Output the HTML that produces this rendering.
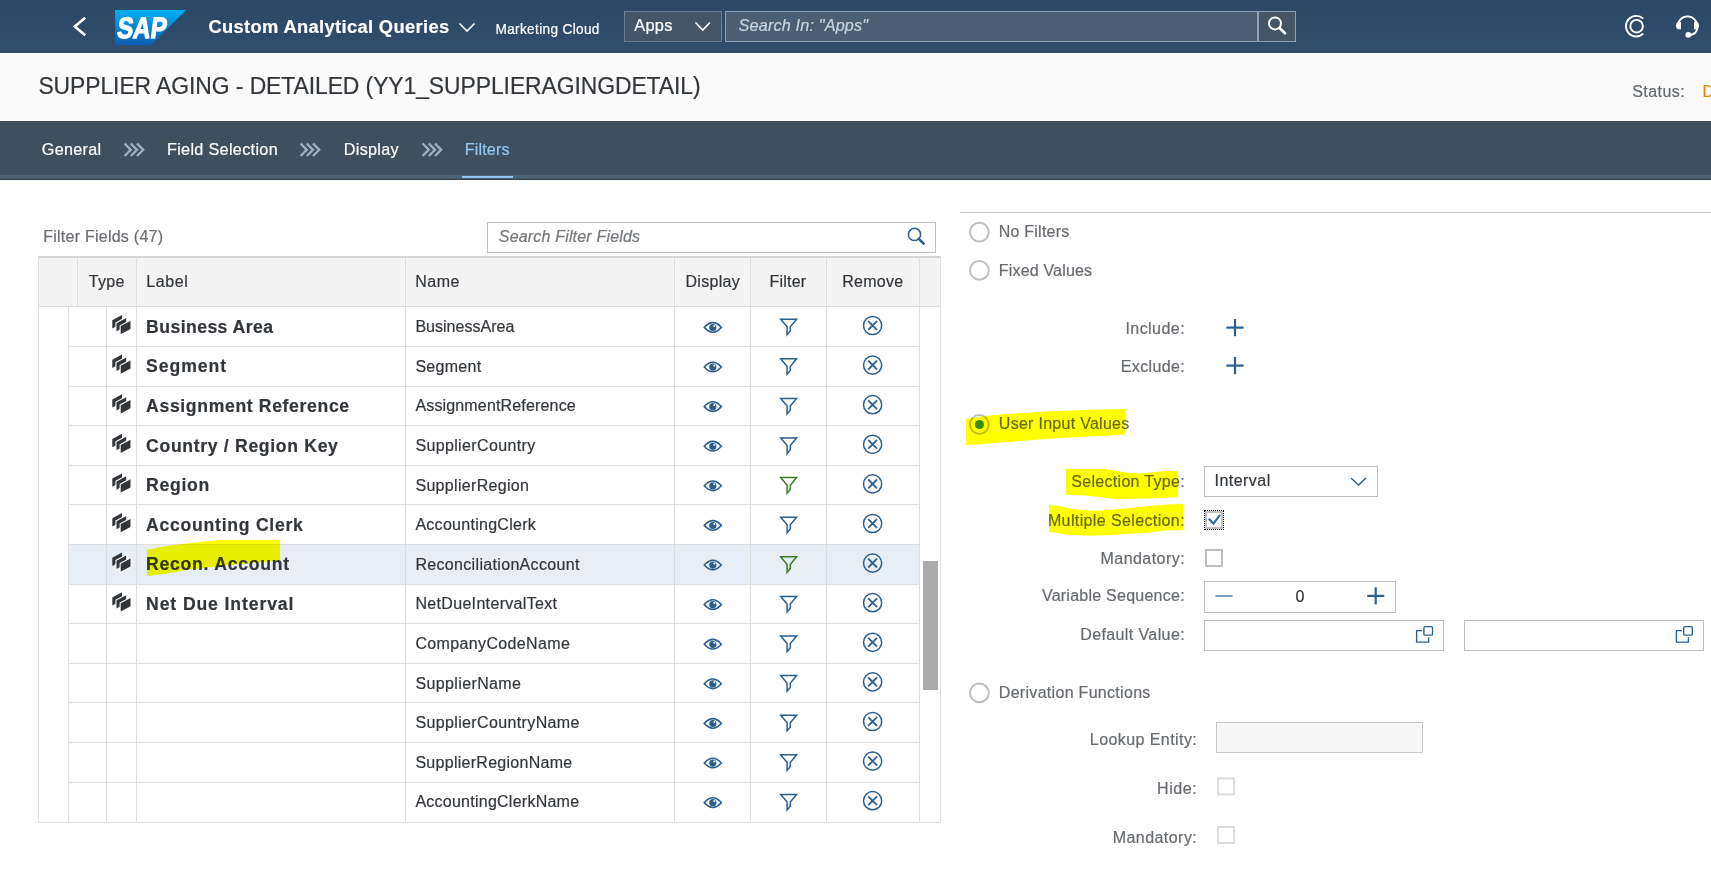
<!DOCTYPE html>
<html><head><meta charset="utf-8"><title>Custom Analytical Queries</title>
<style>
html,body{margin:0;padding:0;width:1711px;height:870px;overflow:hidden;background:#fff;font-family:"Liberation Sans",sans-serif;}
body{position:relative;}
.t{position:absolute;line-height:1;white-space:nowrap;-webkit-text-stroke:0.2px currentColor;}
svg text{font-family:"Liberation Sans",sans-serif;}
</style></head><body>
<div style="position:absolute;left:0px;top:0px;width:1711px;height:53px;background:linear-gradient(#2b4866,#2e4b69 60%,#31506e)"></div>
<div style="position:absolute;left:0px;top:53px;width:1711px;height:68px;background:#fafafa"></div>
<div style="position:absolute;left:0px;top:121px;width:1711px;height:54px;background:#3e4f5f"></div>
<div style="position:absolute;left:0px;top:175px;width:1711px;height:3px;background:#4f6378"></div>
<div style="position:absolute;left:0px;top:178px;width:1711px;height:1px;background:#44556a"></div>
<div style="position:absolute;left:0px;top:179px;width:1711px;height:1px;background:#35434f"></div>
<div style="position:absolute;left:462px;top:176px;width:51px;height:2px;background:#91c8f6"></div>
<svg style="position:absolute;left:0;top:0" width="1711" height="52" viewBox="0 0 1711 52"><defs><linearGradient id="sapg" x1="0" y1="0" x2="0" y2="1"><stop offset="0" stop-color="#00b1f1"/><stop offset="0.55" stop-color="#0a7fd0"/><stop offset="1" stop-color="#0a5db2"/></linearGradient></defs><polyline points="85.2,17.8 74.8,26.5 85.2,35.2" fill="none" stroke="#fff" stroke-width="2.6"/><polygon points="115,10 186,10 151,45 115,45" fill="url(#sapg)"/><g transform="translate(116.2,37.9) skewX(-7)"><text x="0" y="0" font-family="Liberation Sans" font-weight="bold" font-size="29.5" fill="#fff" stroke="#fff" stroke-width="1.3" stroke-linejoin="round" textLength="49.5" lengthAdjust="spacingAndGlyphs">SAP</text></g><polyline points="459.5,23.5 467,31 474.5,23.5" fill="none" stroke="#fff" stroke-width="1.6"/><rect x="624.5" y="11.5" width="97" height="30" fill="#435669" stroke="#6c8096" stroke-width="1"/><polyline points="695.5,22.5 702.75,30 710,22.5" fill="none" stroke="#fff" stroke-width="1.6"/><rect x="725.5" y="11.5" width="532" height="30" fill="#4b5f74" stroke="#8da1b6" stroke-width="1"/><rect x="1258.5" y="11.5" width="37" height="30" fill="#435567" stroke="#8da1b6" stroke-width="1"/><circle cx="1275" cy="23.4" r="6" fill="none" stroke="#fff" stroke-width="2"/><line x1="1279.3" y1="27.8" x2="1285" y2="33.3" stroke="#fff" stroke-width="2.6" stroke-linecap="round"/><path d="M1643.2,18.6 A10.3,10.3 0 1 0 1643.2,33.8" fill="none" stroke="#fff" stroke-width="1.9"/><circle cx="1636.6" cy="26.2" r="6.3" fill="none" stroke="#fff" stroke-width="1.9"/><path d="M1677.6,26.4 A9.9,10.1 0 0 1 1697.4,26.4 L1697.4,28 A8.5,8.5 0 0 1 1690,35" fill="none" stroke="#fff" stroke-width="1.8"/><path d="M1681,22 L1681,29.2 L1678.6,29.2 A2.6,3.6 0 0 1 1678.6,22 Z" fill="#fff"/><path d="M1694,22 L1694,29.2 L1696.3,29.2 A2.6,3.6 0 0 0 1696.3,22 Z" fill="#fff"/><circle cx="1688.3" cy="34.8" r="2.9" fill="#fff"/></svg>
<div class="t" style="left:208.50px;top:18.11px;font-size:18.3px;color:#fff;font-weight:bold;letter-spacing:0.36px;font-style:normal;">Custom Analytical Queries</div>
<div class="t" style="left:495.50px;top:22.89px;font-size:13.6px;color:#fff;font-weight:normal;letter-spacing:0.35px;font-style:normal;transform:scaleY(1.1);transform-origin:0 11.51px;">Marketing Cloud</div>
<div class="t" style="left:634.20px;top:16.92px;font-size:16.4px;color:#fff;font-weight:normal;letter-spacing:0.27px;font-style:normal;">Apps</div>
<div class="t" style="left:738.60px;top:17.09px;font-size:16.2px;color:#c9d4df;font-weight:normal;letter-spacing:0.17px;font-style:italic;">Search In: "Apps"</div>
<div class="t" style="left:38.40px;top:74.82px;font-size:22.9px;color:#32363a;font-weight:normal;letter-spacing:-0.07px;font-style:normal;transform:scaleY(1.08);transform-origin:0 19.38px;">SUPPLIER AGING - DETAILED (YY1_SUPPLIERAGINGDETAIL)</div>
<div class="t" style="left:1632.20px;top:83.86px;font-size:16px;color:#666a6e;font-weight:normal;letter-spacing:0.45px;font-style:normal;">Status:</div>
<div class="t" style="left:1702.50px;top:83.86px;font-size:16px;color:#e8870a;font-weight:normal;letter-spacing:0px;font-style:normal;">D</div>
<svg style="position:absolute;left:0;top:121px" width="1711" height="60" viewBox="0 121 1711 60"><polyline points="124.6,143.5 130.8,149.8 124.6,156" fill="none" stroke="#9bb0c5" stroke-width="2.4"/><polyline points="130.8,143.5 137.0,149.8 130.8,156" fill="none" stroke="#9bb0c5" stroke-width="2.4"/><polyline points="137.0,143.5 143.2,149.8 137.0,156" fill="none" stroke="#9bb0c5" stroke-width="2.4"/><polyline points="300.6,143.5 306.8,149.8 300.6,156" fill="none" stroke="#9bb0c5" stroke-width="2.4"/><polyline points="306.8,143.5 313.0,149.8 306.8,156" fill="none" stroke="#9bb0c5" stroke-width="2.4"/><polyline points="313.0,143.5 319.2,149.8 313.0,156" fill="none" stroke="#9bb0c5" stroke-width="2.4"/><polyline points="422.6,143.5 428.8,149.8 422.6,156" fill="none" stroke="#9bb0c5" stroke-width="2.4"/><polyline points="428.8,143.5 435.0,149.8 428.8,156" fill="none" stroke="#9bb0c5" stroke-width="2.4"/><polyline points="435.0,143.5 441.2,149.8 435.0,156" fill="none" stroke="#9bb0c5" stroke-width="2.4"/></svg>
<div class="t" style="left:41.80px;top:141.49px;font-size:16.2px;color:#fff;font-weight:normal;letter-spacing:0.28px;font-style:normal;">General</div>
<div class="t" style="left:167.00px;top:141.49px;font-size:16.2px;color:#fff;font-weight:normal;letter-spacing:0.32px;font-style:normal;">Field Selection</div>
<div class="t" style="left:343.80px;top:141.49px;font-size:16.2px;color:#fff;font-weight:normal;letter-spacing:0.28px;font-style:normal;">Display</div>
<div class="t" style="left:464.80px;top:141.49px;font-size:16.2px;color:#91c8f6;font-weight:normal;letter-spacing:0.12px;font-style:normal;">Filters</div>
<div class="t" style="left:43.20px;top:228.86px;font-size:16px;color:#6a6d70;font-weight:normal;letter-spacing:0.25px;font-style:normal;">Filter Fields (47)</div>
<svg style="position:absolute;left:0;top:0" width="1711" height="870" viewBox="0 0 1711 870"><rect x="487.5" y="222.5" width="448" height="30" fill="#fff" stroke="#bfbfbf" stroke-width="1"/><circle cx="914.5" cy="234.4" r="6.1" fill="none" stroke="#2b5f8f" stroke-width="1.6"/><line x1="918.8" y1="238.8" x2="923.6" y2="243.6" stroke="#2b5f8f" stroke-width="2.6" stroke-linecap="round"/></svg>
<div class="t" style="left:498.80px;top:229.26px;font-size:16px;color:#74777a;font-weight:normal;letter-spacing:0.18px;font-style:italic;">Search Filter Fields</div>
<div style="position:absolute;left:38px;top:256px;width:902px;height:50px;background:#f4f4f4"></div>
<div style="position:absolute;left:68px;top:544px;width:851px;height:40px;background:#e8eef6"></div>
<svg style="position:absolute;left:0;top:0" width="1711" height="870" viewBox="0 0 1711 870"><rect x="38" y="256" width="903" height="2" fill="#d4d4d4"/><rect x="38" y="822" width="903" height="1" fill="#dedede"/><rect x="38" y="256" width="1" height="567" fill="#dedede"/><rect x="940" y="256" width="1" height="567" fill="#dedede"/><rect x="77" y="258" width="1" height="48" fill="#e0e0e0"/><rect x="136" y="258" width="1" height="48" fill="#e0e0e0"/><rect x="405" y="258" width="1" height="48" fill="#e0e0e0"/><rect x="674" y="258" width="1" height="48" fill="#e0e0e0"/><rect x="750" y="258" width="1" height="48" fill="#e0e0e0"/><rect x="826" y="258" width="1" height="48" fill="#e0e0e0"/><rect x="919" y="258" width="1" height="48" fill="#e0e0e0"/><rect x="38" y="306" width="902" height="1" fill="#dedede"/><rect x="68" y="306" width="1" height="516" fill="#dedede"/><rect x="106" y="306" width="1" height="516" fill="#dedede"/><rect x="136" y="306" width="1" height="516" fill="#dedede"/><rect x="405" y="306" width="1" height="516" fill="#dedede"/><rect x="674" y="306" width="1" height="516" fill="#dedede"/><rect x="750" y="306" width="1" height="516" fill="#dedede"/><rect x="826" y="306" width="1" height="516" fill="#dedede"/><rect x="919" y="306" width="1" height="516" fill="#dedede"/><rect x="68" y="346" width="851" height="1" fill="#dedede"/><rect x="68" y="386" width="851" height="1" fill="#dedede"/><rect x="68" y="425" width="851" height="1" fill="#dedede"/><rect x="68" y="465" width="851" height="1" fill="#dedede"/><rect x="68" y="504" width="851" height="1" fill="#dedede"/><rect x="68" y="544" width="851" height="1" fill="#dedede"/><rect x="68" y="584" width="851" height="1" fill="#dedede"/><rect x="68" y="623" width="851" height="1" fill="#dedede"/><rect x="68" y="663" width="851" height="1" fill="#dedede"/><rect x="68" y="702" width="851" height="1" fill="#dedede"/><rect x="68" y="742" width="851" height="1" fill="#dedede"/><rect x="68" y="782" width="851" height="1" fill="#dedede"/></svg>
<div class="t" style="left:88.80px;top:274.46px;font-size:16px;color:#32363a;font-weight:normal;letter-spacing:0.3px;font-style:normal;">Type</div>
<div class="t" style="left:146.30px;top:274.46px;font-size:16px;color:#32363a;font-weight:normal;letter-spacing:0.6px;font-style:normal;">Label</div>
<div class="t" style="left:415.30px;top:274.46px;font-size:16px;color:#32363a;font-weight:normal;letter-spacing:0.5px;font-style:normal;">Name</div>
<div class="t" style="left:685.50px;top:274.46px;font-size:16px;color:#32363a;font-weight:normal;letter-spacing:0.28px;font-style:normal;">Display</div>
<div class="t" style="left:769.50px;top:274.46px;font-size:16px;color:#32363a;font-weight:normal;letter-spacing:0.2px;font-style:normal;">Filter</div>
<div class="t" style="left:842.20px;top:274.46px;font-size:16px;color:#32363a;font-weight:normal;letter-spacing:0.26px;font-style:normal;">Remove</div>
<div class="t" style="left:146.10px;top:318.70px;font-size:17.6px;color:#32363a;font-weight:bold;letter-spacing:0.44px;font-style:normal;">Business Area</div>
<div class="t" style="left:415.40px;top:319.16px;font-size:16px;color:#32363a;font-weight:normal;letter-spacing:0.02px;font-style:normal;">BusinessArea</div>
<div class="t" style="left:146.10px;top:358.30px;font-size:17.6px;color:#32363a;font-weight:bold;letter-spacing:0.95px;font-style:normal;">Segment</div>
<div class="t" style="left:415.40px;top:358.76px;font-size:16px;color:#32363a;font-weight:normal;letter-spacing:0.28px;font-style:normal;">Segment</div>
<div class="t" style="left:146.10px;top:397.90px;font-size:17.6px;color:#32363a;font-weight:bold;letter-spacing:0.65px;font-style:normal;">Assignment Reference</div>
<div class="t" style="left:415.40px;top:398.36px;font-size:16px;color:#32363a;font-weight:normal;letter-spacing:0.16px;font-style:normal;">AssignmentReference</div>
<div class="t" style="left:146.10px;top:437.50px;font-size:17.6px;color:#32363a;font-weight:bold;letter-spacing:0.68px;font-style:normal;">Country / Region Key</div>
<div class="t" style="left:415.40px;top:437.96px;font-size:16px;color:#32363a;font-weight:normal;letter-spacing:0.36px;font-style:normal;">SupplierCountry</div>
<div class="t" style="left:146.10px;top:477.10px;font-size:17.6px;color:#32363a;font-weight:bold;letter-spacing:0.72px;font-style:normal;">Region</div>
<div class="t" style="left:415.40px;top:477.56px;font-size:16px;color:#32363a;font-weight:normal;letter-spacing:0.32px;font-style:normal;">SupplierRegion</div>
<div class="t" style="left:146.10px;top:516.70px;font-size:17.6px;color:#32363a;font-weight:bold;letter-spacing:0.74px;font-style:normal;">Accounting Clerk</div>
<div class="t" style="left:415.40px;top:517.16px;font-size:16px;color:#32363a;font-weight:normal;letter-spacing:0.28px;font-style:normal;">AccountingClerk</div>
<div class="t" style="left:146.10px;top:556.30px;font-size:17.6px;color:#32363a;font-weight:bold;letter-spacing:0.75px;font-style:normal;">Recon. Account</div>
<div class="t" style="left:415.40px;top:556.76px;font-size:16px;color:#32363a;font-weight:normal;letter-spacing:0.33px;font-style:normal;">ReconciliationAccount</div>
<div class="t" style="left:146.10px;top:595.90px;font-size:17.6px;color:#32363a;font-weight:bold;letter-spacing:0.89px;font-style:normal;">Net Due Interval</div>
<div class="t" style="left:415.40px;top:596.36px;font-size:16px;color:#32363a;font-weight:normal;letter-spacing:0.33px;font-style:normal;">NetDueIntervalText</div>
<div class="t" style="left:415.40px;top:635.96px;font-size:16px;color:#32363a;font-weight:normal;letter-spacing:0.36px;font-style:normal;">CompanyCodeName</div>
<div class="t" style="left:415.40px;top:675.56px;font-size:16px;color:#32363a;font-weight:normal;letter-spacing:0.38px;font-style:normal;">SupplierName</div>
<div class="t" style="left:415.40px;top:715.16px;font-size:16px;color:#32363a;font-weight:normal;letter-spacing:0.37px;font-style:normal;">SupplierCountryName</div>
<div class="t" style="left:415.40px;top:754.76px;font-size:16px;color:#32363a;font-weight:normal;letter-spacing:0.28px;font-style:normal;">SupplierRegionName</div>
<div class="t" style="left:415.40px;top:794.36px;font-size:16px;color:#32363a;font-weight:normal;letter-spacing:0.25px;font-style:normal;">AccountingClerkName</div>
<svg style="position:absolute;left:0;top:0" width="1711" height="870" viewBox="0 0 1711 870"><g transform="translate(0,0.00)"><polygon points="112.3,320.2 122,315 122,323.2 112.3,328.4" fill="#32363a"/><polygon points="116.5,323.15 126.2,317.95 126.2,326.15 116.5,331.35" fill="#fff" stroke="#fff" stroke-width="2.2"/><polygon points="116.5,323.15 126.2,317.95 126.2,326.15 116.5,331.35" fill="#32363a"/><polygon points="120.7,326.1 130.5,320.9 130.5,329 120.7,334.2" fill="#fff" stroke="#fff" stroke-width="2.2"/><polygon points="120.7,326.1 130.5,320.9 130.5,329 120.7,334.2" fill="#32363a"/></g><g transform="translate(0,0.00)"><path d="M704.3,327.4 Q712.8,317.8 721.3,327.4 Q712.8,337 704.3,327.4 Z" fill="none" stroke="#2b5f8f" stroke-width="1.6"/><circle cx="712.8" cy="327.5" r="3.6" fill="#2b5f8f"/><circle cx="714.3" cy="325.9" r="1" fill="#fff"/></g><g transform="translate(0,0.00)"><path d="M780.7,319.2 L796.6,319.2 L790.3,326.8 L790.3,331 L787.1,334.8 L787.1,326.8 Z" fill="none" stroke="#2b5f8f" stroke-width="1.5" stroke-linejoin="miter"/><circle cx="872.6" cy="325.5" r="9.1" fill="none" stroke="#2b5f8f" stroke-width="1.5"/><path d="M868.2,321.1 L877,329.9 M877,321.1 L868.2,329.9" stroke="#2b5f8f" stroke-width="1.8"/></g><g transform="translate(0,39.60)"><polygon points="112.3,320.2 122,315 122,323.2 112.3,328.4" fill="#32363a"/><polygon points="116.5,323.15 126.2,317.95 126.2,326.15 116.5,331.35" fill="#fff" stroke="#fff" stroke-width="2.2"/><polygon points="116.5,323.15 126.2,317.95 126.2,326.15 116.5,331.35" fill="#32363a"/><polygon points="120.7,326.1 130.5,320.9 130.5,329 120.7,334.2" fill="#fff" stroke="#fff" stroke-width="2.2"/><polygon points="120.7,326.1 130.5,320.9 130.5,329 120.7,334.2" fill="#32363a"/></g><g transform="translate(0,39.60)"><path d="M704.3,327.4 Q712.8,317.8 721.3,327.4 Q712.8,337 704.3,327.4 Z" fill="none" stroke="#2b5f8f" stroke-width="1.6"/><circle cx="712.8" cy="327.5" r="3.6" fill="#2b5f8f"/><circle cx="714.3" cy="325.9" r="1" fill="#fff"/></g><g transform="translate(0,39.60)"><path d="M780.7,319.2 L796.6,319.2 L790.3,326.8 L790.3,331 L787.1,334.8 L787.1,326.8 Z" fill="none" stroke="#2b5f8f" stroke-width="1.5" stroke-linejoin="miter"/><circle cx="872.6" cy="325.5" r="9.1" fill="none" stroke="#2b5f8f" stroke-width="1.5"/><path d="M868.2,321.1 L877,329.9 M877,321.1 L868.2,329.9" stroke="#2b5f8f" stroke-width="1.8"/></g><g transform="translate(0,79.20)"><polygon points="112.3,320.2 122,315 122,323.2 112.3,328.4" fill="#32363a"/><polygon points="116.5,323.15 126.2,317.95 126.2,326.15 116.5,331.35" fill="#fff" stroke="#fff" stroke-width="2.2"/><polygon points="116.5,323.15 126.2,317.95 126.2,326.15 116.5,331.35" fill="#32363a"/><polygon points="120.7,326.1 130.5,320.9 130.5,329 120.7,334.2" fill="#fff" stroke="#fff" stroke-width="2.2"/><polygon points="120.7,326.1 130.5,320.9 130.5,329 120.7,334.2" fill="#32363a"/></g><g transform="translate(0,79.20)"><path d="M704.3,327.4 Q712.8,317.8 721.3,327.4 Q712.8,337 704.3,327.4 Z" fill="none" stroke="#2b5f8f" stroke-width="1.6"/><circle cx="712.8" cy="327.5" r="3.6" fill="#2b5f8f"/><circle cx="714.3" cy="325.9" r="1" fill="#fff"/></g><g transform="translate(0,79.20)"><path d="M780.7,319.2 L796.6,319.2 L790.3,326.8 L790.3,331 L787.1,334.8 L787.1,326.8 Z" fill="none" stroke="#2b5f8f" stroke-width="1.5" stroke-linejoin="miter"/><circle cx="872.6" cy="325.5" r="9.1" fill="none" stroke="#2b5f8f" stroke-width="1.5"/><path d="M868.2,321.1 L877,329.9 M877,321.1 L868.2,329.9" stroke="#2b5f8f" stroke-width="1.8"/></g><g transform="translate(0,118.80)"><polygon points="112.3,320.2 122,315 122,323.2 112.3,328.4" fill="#32363a"/><polygon points="116.5,323.15 126.2,317.95 126.2,326.15 116.5,331.35" fill="#fff" stroke="#fff" stroke-width="2.2"/><polygon points="116.5,323.15 126.2,317.95 126.2,326.15 116.5,331.35" fill="#32363a"/><polygon points="120.7,326.1 130.5,320.9 130.5,329 120.7,334.2" fill="#fff" stroke="#fff" stroke-width="2.2"/><polygon points="120.7,326.1 130.5,320.9 130.5,329 120.7,334.2" fill="#32363a"/></g><g transform="translate(0,118.80)"><path d="M704.3,327.4 Q712.8,317.8 721.3,327.4 Q712.8,337 704.3,327.4 Z" fill="none" stroke="#2b5f8f" stroke-width="1.6"/><circle cx="712.8" cy="327.5" r="3.6" fill="#2b5f8f"/><circle cx="714.3" cy="325.9" r="1" fill="#fff"/></g><g transform="translate(0,118.80)"><path d="M780.7,319.2 L796.6,319.2 L790.3,326.8 L790.3,331 L787.1,334.8 L787.1,326.8 Z" fill="none" stroke="#2b5f8f" stroke-width="1.5" stroke-linejoin="miter"/><circle cx="872.6" cy="325.5" r="9.1" fill="none" stroke="#2b5f8f" stroke-width="1.5"/><path d="M868.2,321.1 L877,329.9 M877,321.1 L868.2,329.9" stroke="#2b5f8f" stroke-width="1.8"/></g><g transform="translate(0,158.40)"><polygon points="112.3,320.2 122,315 122,323.2 112.3,328.4" fill="#32363a"/><polygon points="116.5,323.15 126.2,317.95 126.2,326.15 116.5,331.35" fill="#fff" stroke="#fff" stroke-width="2.2"/><polygon points="116.5,323.15 126.2,317.95 126.2,326.15 116.5,331.35" fill="#32363a"/><polygon points="120.7,326.1 130.5,320.9 130.5,329 120.7,334.2" fill="#fff" stroke="#fff" stroke-width="2.2"/><polygon points="120.7,326.1 130.5,320.9 130.5,329 120.7,334.2" fill="#32363a"/></g><g transform="translate(0,158.40)"><path d="M704.3,327.4 Q712.8,317.8 721.3,327.4 Q712.8,337 704.3,327.4 Z" fill="none" stroke="#2b5f8f" stroke-width="1.6"/><circle cx="712.8" cy="327.5" r="3.6" fill="#2b5f8f"/><circle cx="714.3" cy="325.9" r="1" fill="#fff"/></g><g transform="translate(0,158.40)"><path d="M780.7,319.2 L796.6,319.2 L790.3,326.8 L790.3,331 L787.1,334.8 L787.1,326.8 Z" fill="none" stroke="#3b7d22" stroke-width="1.5" stroke-linejoin="miter"/><circle cx="872.6" cy="325.5" r="9.1" fill="none" stroke="#2b5f8f" stroke-width="1.5"/><path d="M868.2,321.1 L877,329.9 M877,321.1 L868.2,329.9" stroke="#2b5f8f" stroke-width="1.8"/></g><g transform="translate(0,198.00)"><polygon points="112.3,320.2 122,315 122,323.2 112.3,328.4" fill="#32363a"/><polygon points="116.5,323.15 126.2,317.95 126.2,326.15 116.5,331.35" fill="#fff" stroke="#fff" stroke-width="2.2"/><polygon points="116.5,323.15 126.2,317.95 126.2,326.15 116.5,331.35" fill="#32363a"/><polygon points="120.7,326.1 130.5,320.9 130.5,329 120.7,334.2" fill="#fff" stroke="#fff" stroke-width="2.2"/><polygon points="120.7,326.1 130.5,320.9 130.5,329 120.7,334.2" fill="#32363a"/></g><g transform="translate(0,198.00)"><path d="M704.3,327.4 Q712.8,317.8 721.3,327.4 Q712.8,337 704.3,327.4 Z" fill="none" stroke="#2b5f8f" stroke-width="1.6"/><circle cx="712.8" cy="327.5" r="3.6" fill="#2b5f8f"/><circle cx="714.3" cy="325.9" r="1" fill="#fff"/></g><g transform="translate(0,198.00)"><path d="M780.7,319.2 L796.6,319.2 L790.3,326.8 L790.3,331 L787.1,334.8 L787.1,326.8 Z" fill="none" stroke="#2b5f8f" stroke-width="1.5" stroke-linejoin="miter"/><circle cx="872.6" cy="325.5" r="9.1" fill="none" stroke="#2b5f8f" stroke-width="1.5"/><path d="M868.2,321.1 L877,329.9 M877,321.1 L868.2,329.9" stroke="#2b5f8f" stroke-width="1.8"/></g><g transform="translate(0,237.60)"><polygon points="112.3,320.2 122,315 122,323.2 112.3,328.4" fill="#32363a"/><polygon points="116.5,323.15 126.2,317.95 126.2,326.15 116.5,331.35" fill="#fff" stroke="#fff" stroke-width="2.2"/><polygon points="116.5,323.15 126.2,317.95 126.2,326.15 116.5,331.35" fill="#32363a"/><polygon points="120.7,326.1 130.5,320.9 130.5,329 120.7,334.2" fill="#fff" stroke="#fff" stroke-width="2.2"/><polygon points="120.7,326.1 130.5,320.9 130.5,329 120.7,334.2" fill="#32363a"/></g><g transform="translate(0,237.60)"><path d="M704.3,327.4 Q712.8,317.8 721.3,327.4 Q712.8,337 704.3,327.4 Z" fill="none" stroke="#2b5f8f" stroke-width="1.6"/><circle cx="712.8" cy="327.5" r="3.6" fill="#2b5f8f"/><circle cx="714.3" cy="325.9" r="1" fill="#fff"/></g><g transform="translate(0,237.60)"><path d="M780.7,319.2 L796.6,319.2 L790.3,326.8 L790.3,331 L787.1,334.8 L787.1,326.8 Z" fill="none" stroke="#3b7d22" stroke-width="1.5" stroke-linejoin="miter"/><circle cx="872.6" cy="325.5" r="9.1" fill="none" stroke="#2b5f8f" stroke-width="1.5"/><path d="M868.2,321.1 L877,329.9 M877,321.1 L868.2,329.9" stroke="#2b5f8f" stroke-width="1.8"/></g><g transform="translate(0,277.20)"><polygon points="112.3,320.2 122,315 122,323.2 112.3,328.4" fill="#32363a"/><polygon points="116.5,323.15 126.2,317.95 126.2,326.15 116.5,331.35" fill="#fff" stroke="#fff" stroke-width="2.2"/><polygon points="116.5,323.15 126.2,317.95 126.2,326.15 116.5,331.35" fill="#32363a"/><polygon points="120.7,326.1 130.5,320.9 130.5,329 120.7,334.2" fill="#fff" stroke="#fff" stroke-width="2.2"/><polygon points="120.7,326.1 130.5,320.9 130.5,329 120.7,334.2" fill="#32363a"/></g><g transform="translate(0,277.20)"><path d="M704.3,327.4 Q712.8,317.8 721.3,327.4 Q712.8,337 704.3,327.4 Z" fill="none" stroke="#2b5f8f" stroke-width="1.6"/><circle cx="712.8" cy="327.5" r="3.6" fill="#2b5f8f"/><circle cx="714.3" cy="325.9" r="1" fill="#fff"/></g><g transform="translate(0,277.20)"><path d="M780.7,319.2 L796.6,319.2 L790.3,326.8 L790.3,331 L787.1,334.8 L787.1,326.8 Z" fill="none" stroke="#2b5f8f" stroke-width="1.5" stroke-linejoin="miter"/><circle cx="872.6" cy="325.5" r="9.1" fill="none" stroke="#2b5f8f" stroke-width="1.5"/><path d="M868.2,321.1 L877,329.9 M877,321.1 L868.2,329.9" stroke="#2b5f8f" stroke-width="1.8"/></g><g transform="translate(0,316.80)"><path d="M704.3,327.4 Q712.8,317.8 721.3,327.4 Q712.8,337 704.3,327.4 Z" fill="none" stroke="#2b5f8f" stroke-width="1.6"/><circle cx="712.8" cy="327.5" r="3.6" fill="#2b5f8f"/><circle cx="714.3" cy="325.9" r="1" fill="#fff"/></g><g transform="translate(0,316.80)"><path d="M780.7,319.2 L796.6,319.2 L790.3,326.8 L790.3,331 L787.1,334.8 L787.1,326.8 Z" fill="none" stroke="#2b5f8f" stroke-width="1.5" stroke-linejoin="miter"/><circle cx="872.6" cy="325.5" r="9.1" fill="none" stroke="#2b5f8f" stroke-width="1.5"/><path d="M868.2,321.1 L877,329.9 M877,321.1 L868.2,329.9" stroke="#2b5f8f" stroke-width="1.8"/></g><g transform="translate(0,356.40)"><path d="M704.3,327.4 Q712.8,317.8 721.3,327.4 Q712.8,337 704.3,327.4 Z" fill="none" stroke="#2b5f8f" stroke-width="1.6"/><circle cx="712.8" cy="327.5" r="3.6" fill="#2b5f8f"/><circle cx="714.3" cy="325.9" r="1" fill="#fff"/></g><g transform="translate(0,356.40)"><path d="M780.7,319.2 L796.6,319.2 L790.3,326.8 L790.3,331 L787.1,334.8 L787.1,326.8 Z" fill="none" stroke="#2b5f8f" stroke-width="1.5" stroke-linejoin="miter"/><circle cx="872.6" cy="325.5" r="9.1" fill="none" stroke="#2b5f8f" stroke-width="1.5"/><path d="M868.2,321.1 L877,329.9 M877,321.1 L868.2,329.9" stroke="#2b5f8f" stroke-width="1.8"/></g><g transform="translate(0,396.00)"><path d="M704.3,327.4 Q712.8,317.8 721.3,327.4 Q712.8,337 704.3,327.4 Z" fill="none" stroke="#2b5f8f" stroke-width="1.6"/><circle cx="712.8" cy="327.5" r="3.6" fill="#2b5f8f"/><circle cx="714.3" cy="325.9" r="1" fill="#fff"/></g><g transform="translate(0,396.00)"><path d="M780.7,319.2 L796.6,319.2 L790.3,326.8 L790.3,331 L787.1,334.8 L787.1,326.8 Z" fill="none" stroke="#2b5f8f" stroke-width="1.5" stroke-linejoin="miter"/><circle cx="872.6" cy="325.5" r="9.1" fill="none" stroke="#2b5f8f" stroke-width="1.5"/><path d="M868.2,321.1 L877,329.9 M877,321.1 L868.2,329.9" stroke="#2b5f8f" stroke-width="1.8"/></g><g transform="translate(0,435.60)"><path d="M704.3,327.4 Q712.8,317.8 721.3,327.4 Q712.8,337 704.3,327.4 Z" fill="none" stroke="#2b5f8f" stroke-width="1.6"/><circle cx="712.8" cy="327.5" r="3.6" fill="#2b5f8f"/><circle cx="714.3" cy="325.9" r="1" fill="#fff"/></g><g transform="translate(0,435.60)"><path d="M780.7,319.2 L796.6,319.2 L790.3,326.8 L790.3,331 L787.1,334.8 L787.1,326.8 Z" fill="none" stroke="#2b5f8f" stroke-width="1.5" stroke-linejoin="miter"/><circle cx="872.6" cy="325.5" r="9.1" fill="none" stroke="#2b5f8f" stroke-width="1.5"/><path d="M868.2,321.1 L877,329.9 M877,321.1 L868.2,329.9" stroke="#2b5f8f" stroke-width="1.8"/></g><g transform="translate(0,475.20)"><path d="M704.3,327.4 Q712.8,317.8 721.3,327.4 Q712.8,337 704.3,327.4 Z" fill="none" stroke="#2b5f8f" stroke-width="1.6"/><circle cx="712.8" cy="327.5" r="3.6" fill="#2b5f8f"/><circle cx="714.3" cy="325.9" r="1" fill="#fff"/></g><g transform="translate(0,475.20)"><path d="M780.7,319.2 L796.6,319.2 L790.3,326.8 L790.3,331 L787.1,334.8 L787.1,326.8 Z" fill="none" stroke="#2b5f8f" stroke-width="1.5" stroke-linejoin="miter"/><circle cx="872.6" cy="325.5" r="9.1" fill="none" stroke="#2b5f8f" stroke-width="1.5"/><path d="M868.2,321.1 L877,329.9 M877,321.1 L868.2,329.9" stroke="#2b5f8f" stroke-width="1.8"/></g></svg>
<div style="position:absolute;left:923px;top:561px;width:15px;height:129px;background:#ababab"></div>
<div style="position:absolute;left:960px;top:212px;width:751px;height:1px;background:#c6c6c6"></div>
<svg style="position:absolute;left:0;top:0" width="1711" height="870" viewBox="0 0 1711 870"><circle cx="979.4" cy="232.2" r="9.4" fill="#fff" stroke="#bfbfbf" stroke-width="2"/><circle cx="979.4" cy="270.4" r="9.4" fill="#fff" stroke="#bfbfbf" stroke-width="2"/><circle cx="979.4" cy="424.5" r="9.4" fill="#fff" stroke="#bfbfbf" stroke-width="2"/><circle cx="979.4" cy="424.5" r="4.6" fill="#3f8a1c"/><circle cx="979.4" cy="692.9" r="9.4" fill="#fff" stroke="#bfbfbf" stroke-width="2"/><rect x="1226.40" y="326.50" width="17.20" height="2.2" fill="#2b5f8f"/><rect x="1233.90" y="319.00" width="2.2" height="17.20" fill="#2b5f8f"/><rect x="1226.40" y="364.50" width="17.20" height="2.2" fill="#2b5f8f"/><rect x="1233.90" y="357.00" width="2.2" height="17.20" fill="#2b5f8f"/><rect x="1204.5" y="466.5" width="173" height="30" fill="#fff" stroke="#bfbfbf" stroke-width="1"/><polyline points="1351,478 1358.5,485 1366,478" fill="none" stroke="#2b5f8f" stroke-width="1.5"/><rect x="1206" y="512" width="16" height="16" fill="#fff" stroke="#bfbfbf" stroke-width="2"/><polyline points="1208.8,518.8 1213.4,523.6 1220,514.8" fill="none" stroke="#2b6cb0" stroke-width="2.2"/><rect x="1206" y="550" width="16" height="16" fill="#fff" stroke="#bfbfbf" stroke-width="2"/><rect x="1204.5" y="581.5" width="191" height="31" fill="#fff" stroke="#bfbfbf" stroke-width="1"/><rect x="1215.5" y="595" width="17" height="2" fill="#7c9dbd"/><rect x="1367.20" y="594.80" width="17.00" height="2.2" fill="#2b5f8f"/><rect x="1374.60" y="587.40" width="2.2" height="17.00" fill="#2b5f8f"/><rect x="1204.5" y="620.5" width="239" height="30" fill="#fff" stroke="#bfbfbf" stroke-width="1"/><path d="M1422.10,630.65 H1416.60 V642.15 H1428.60 V637.3" fill="none" stroke="#2b5f8f" stroke-width="1.35" stroke-linejoin="round"/><rect x="1423.90" y="626.65" width="8.6" height="8.5" rx="1" fill="none" stroke="#2b5f8f" stroke-width="1.35"/><rect x="1464.5" y="620.5" width="239" height="30" fill="#fff" stroke="#bfbfbf" stroke-width="1"/><path d="M1681.90,630.65 H1676.40 V642.15 H1688.40 V637.3" fill="none" stroke="#2b5f8f" stroke-width="1.35" stroke-linejoin="round"/><rect x="1683.70" y="626.65" width="8.6" height="8.5" rx="1" fill="none" stroke="#2b5f8f" stroke-width="1.35"/><rect x="1216.5" y="722.5" width="206" height="30" fill="#f7f7f7" stroke="#c8c8c8" stroke-width="1"/><rect x="1218" y="778.5" width="16" height="16" fill="#fff" stroke="#dddddd" stroke-width="2"/><rect x="1218" y="827" width="16" height="16" fill="#fff" stroke="#dddddd" stroke-width="2"/></svg>
<div class="t" style="left:998.80px;top:224.46px;font-size:16px;color:#666a6e;font-weight:normal;letter-spacing:0.22px;font-style:normal;">No Filters</div>
<div class="t" style="left:998.80px;top:262.66px;font-size:16px;color:#666a6e;font-weight:normal;letter-spacing:0.18px;font-style:normal;">Fixed Values</div>
<div class="t" style="right:525.95px;top:320.76px;font-size:16px;color:#666a6e;font-weight:normal;letter-spacing:0.45px;font-style:normal;">Include:</div>
<div class="t" style="right:526.06px;top:358.76px;font-size:16px;color:#666a6e;font-weight:normal;letter-spacing:0.34px;font-style:normal;">Exclude:</div>
<div class="t" style="left:998.80px;top:416.06px;font-size:16px;color:#666a6e;font-weight:normal;letter-spacing:0.28px;font-style:normal;">User Input Values</div>
<div class="t" style="right:526.10px;top:474.26px;font-size:16px;color:#666a6e;font-weight:normal;letter-spacing:0.3px;font-style:normal;">Selection Type:</div>
<div class="t" style="left:1214.60px;top:472.66px;font-size:16px;color:#32363a;font-weight:normal;letter-spacing:0.45px;font-style:normal;">Interval</div>
<div class="t" style="right:526.02px;top:513.36px;font-size:16px;color:#666a6e;font-weight:normal;letter-spacing:0.38px;font-style:normal;">Multiple Selection:</div>
<div class="t" style="right:525.95px;top:550.86px;font-size:16px;color:#666a6e;font-weight:normal;letter-spacing:0.45px;font-style:normal;">Mandatory:</div>
<div class="t" style="right:526.15px;top:588.46px;font-size:16px;color:#666a6e;font-weight:normal;letter-spacing:0.25px;font-style:normal;">Variable Sequence:</div>
<div class="t" style="left:1295.40px;top:588.66px;font-size:16px;color:#32363a;font-weight:normal;letter-spacing:0px;font-style:normal;">0</div>
<div class="t" style="right:526.01px;top:627.46px;font-size:16px;color:#666a6e;font-weight:normal;letter-spacing:0.39px;font-style:normal;">Default Value:</div>
<div class="t" style="left:998.80px;top:684.86px;font-size:16px;color:#666a6e;font-weight:normal;letter-spacing:0.3px;font-style:normal;">Derivation Functions</div>
<div class="t" style="right:513.77px;top:731.76px;font-size:16px;color:#666a6e;font-weight:normal;letter-spacing:0.43px;font-style:normal;">Lookup Entity:</div>
<div class="t" style="right:513.60px;top:780.76px;font-size:16px;color:#666a6e;font-weight:normal;letter-spacing:0.6px;font-style:normal;">Hide:</div>
<div class="t" style="right:513.75px;top:829.76px;font-size:16px;color:#666a6e;font-weight:normal;letter-spacing:0.45px;font-style:normal;">Mandatory:</div>
<div style="position:absolute;left:1204px;top:510px;width:18px;height:18px;border:1px dotted #000;box-sizing:content-box"></div>
<svg style="position:absolute;left:0;top:0;mix-blend-mode:multiply" width="1711" height="870" viewBox="0 0 1711 870"><g fill="#ffff00"><polygon points="147,550 158,547.5 170,545.5 190,543 205,541.5 217.5,540 280,540 280,560.5 250,563 217,566.6 190,569.5 170,573 147,576"/><polygon points="966,418.9 985,416 1000,414.5 1020,413.2 1045,411.5 1070,410.5 1100,409.5 1125,408.9 1125,434.4 1100,436 1070,437.5 1045,439 1020,441 995,443 980,444.5 966,445"/><polygon points="1066,469 1105,469 1115,470.5 1125,472.5 1140,473.5 1155,472 1165,471 1177,471 1177,497 1150,498.5 1115,499 1100,497 1085,495.5 1066,494.7"/><polygon points="1049,505 1060,506 1065,507.5 1072,509 1090,510.8 1110,510 1130,508 1150,506 1165,504.5 1183,504 1183,530 1165,530.5 1150,532.5 1110,535 1090,535.7 1065,534.5 1058,533 1049,532"/></g></svg>
</body></html>
